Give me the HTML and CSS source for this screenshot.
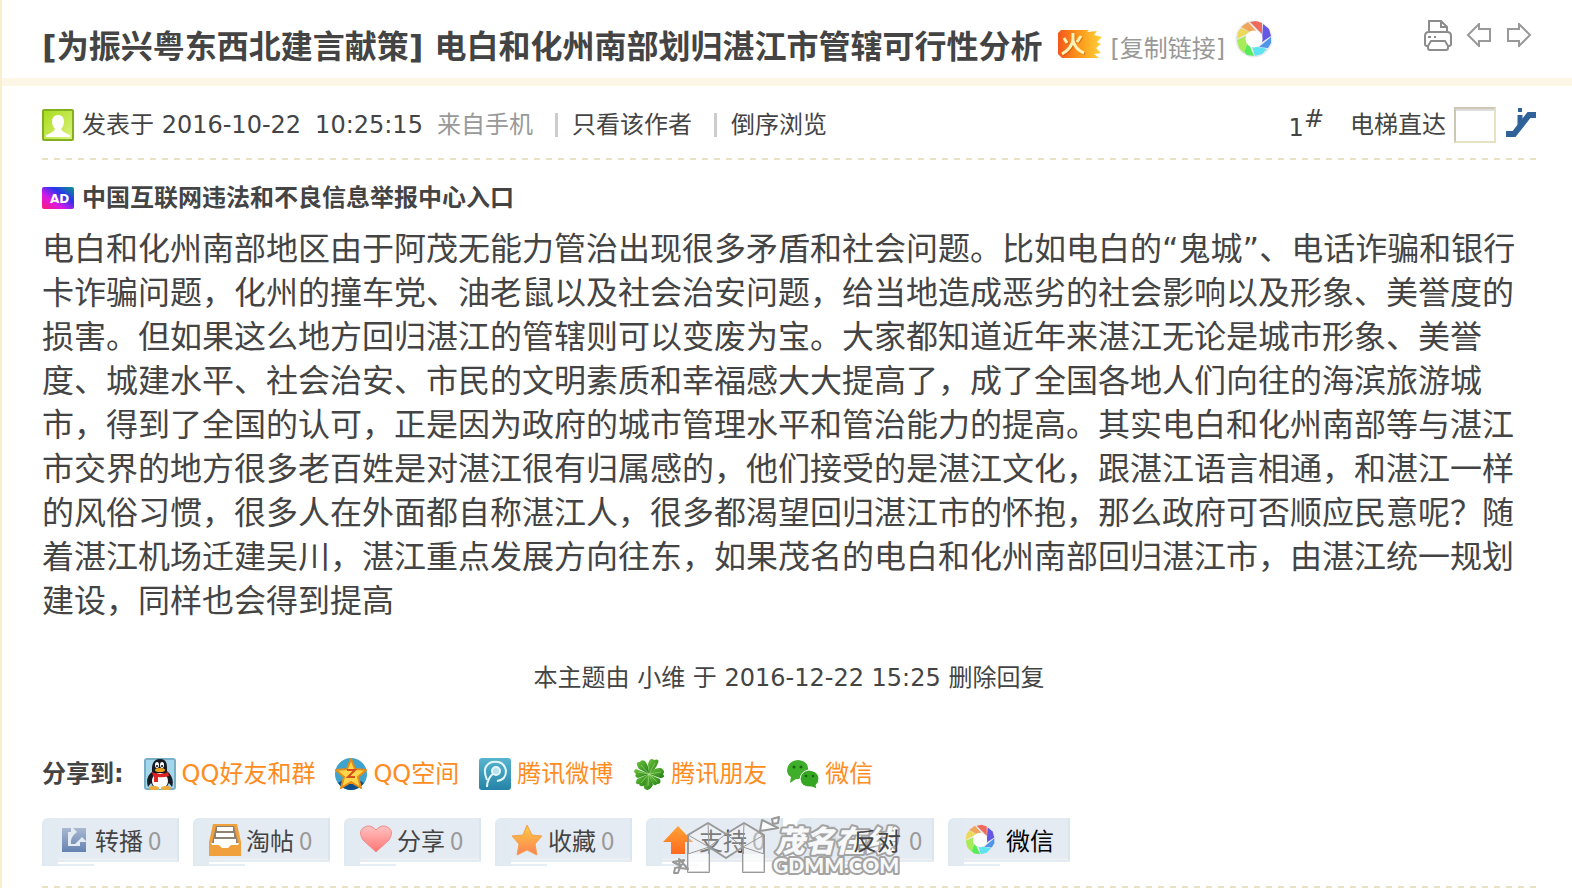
FILE: index.html
```html
<!DOCTYPE html>
<html lang="zh-CN">
<head>
    <meta charset="UTF-8">
    <meta name="viewport" content="width=device-width, initial-scale=1.0">
    <title>电白和化州南部划归湛江市管辖可行性分析</title>
    <link rel="stylesheet" href="styles.css">
</head>
<body>
    <!-- shared shapes -->
    <svg class="sprite" width="0" height="0" aria-hidden="true">
        <symbol id="aperture" viewBox="0 0 38 38">
            <circle cx="19" cy="19" r="18.5" fill="#e9e9ec"/>
            <path d="M15 2 L21 1 L27 3 L27 14 Z" fill="#ee6a5a"/>
            <path d="M28 4 L34 9 L36 16 L27 22 Z" fill="#6557e6"/>
            <path d="M36 17 L36 23 L33 28 L24 27 Z" fill="#4f95ea"/>
            <path d="M32 29 L27 34 L20 36 L17 26 L28 28 Z" fill="#5ee4f0"/>
            <path d="M19 36 L12 35 L9 32 L13 22 Z" fill="#55ec5b"/>
            <path d="M9 33 L4 28 L2 20 L13 15 L13 21 Z" fill="#a6ec58"/>
            <path d="M2 19 L3 12 L6 8 L15 12 Z" fill="#ecd95c"/>
            <path d="M6 7 L13 2 L21 11 L15 12 Z" fill="#efa65a"/>
            <circle cx="19" cy="19" r="8.5" fill="#fff"/>
        </symbol>
        <linearGradient id="fire" x1="0" x2="1"><stop offset="0" stop-color="#f4571c"/><stop offset=".5" stop-color="#fb9a1b"/><stop offset="1" stop-color="#ffd33a"/></linearGradient>
        <linearGradient id="green" x1="0" y1="0" x2="1" y2="1"><stop offset="0" stop-color="#a8dc20"/><stop offset="1" stop-color="#dcf27c"/></linearGradient>
        <linearGradient id="blue" x1="0" y1="0" x2="0" y2="1"><stop offset="0" stop-color="#58b5cf"/><stop offset="1" stop-color="#2583a8"/></linearGradient>
        <linearGradient id="slate" x1="0" y1="0" x2="0" y2="1"><stop offset="0" stop-color="#a9b8d2"/><stop offset="1" stop-color="#6482b0"/></linearGradient>
        <linearGradient id="pink" x1="0" y1="0" x2="0" y2="1"><stop offset="0" stop-color="#ffc3c3"/><stop offset="1" stop-color="#ff7474"/></linearGradient>
        <linearGradient id="gold" x1="0" y1="0" x2="0" y2="1"><stop offset="0" stop-color="#ffcd42"/><stop offset="1" stop-color="#fa8154"/></linearGradient>
        <linearGradient id="orange" x1="0" y1="0" x2="0" y2="1"><stop offset="0" stop-color="#ffa334"/><stop offset="1" stop-color="#ff6a20"/></linearGradient>
        <linearGradient id="leaf" x1="0" y1="0" x2="1" y2="1"><stop offset="0" stop-color="#6fc63d"/><stop offset="1" stop-color="#217d16"/></linearGradient>
    </svg>

    <main class="thread">
        <header class="thread-head">
            <h1>[为振兴粤东西北建言献策] 电白和化州南部划归湛江市管辖可行性分析</h1>
            <svg class="hot" width="44" height="28" viewBox="0 0 44 28" role="img" aria-label="火">
                <path d="M3 0 H31 L29 2 L39 1 L36 5 L44 7 L39 12 L43 14 L38 18 L43 23 L36 24 L41 28 H4 L0 24 V3 Z" fill="url(#fire)"/>
                <path d="M15 3 V10 Q14 18 4 24 M15 11 Q18 20 26 23 M6 8 L9 13 M23 6 L19 12" fill="none" stroke="#a84b12" stroke-width="3" opacity=".4" transform="translate(1 1)"/>
                <path d="M15 3 V10 Q14 18 4 24 M15 11 Q18 20 26 23 M6 8 L9 13 M23 6 L19 12" fill="none" stroke="#fff3b5" stroke-width="3"/>
            </svg>
            <a class="copy-link" href="#">[复制链接]</a>
            <svg class="share-ring" width="38" height="38"><use href="#aperture"/></svg>
            <nav class="tools">
                <a href="#" aria-label="打印">
                    <svg width="28" height="32" viewBox="0 0 28 32" fill="none" stroke="#8c8c8c" stroke-width="2">
                        <path d="M5 12 V2 H17 L23 8 V12 M17 2 V8 H23"/>
                        <path d="M5 27 H3 Q1 27 1 25 V17 Q1 13 5 13 H23 Q27 13 27 17 V25 Q27 27 25 27 H23"/>
                        <path d="M7 22 H21 L24 27 V29 Q24 31 22 31 H6 Q4 31 4 29 V27 Z M4 18 H7 M10 18 H12"/>
                    </svg>
                </a>
                <a href="#" aria-label="上一主题">
                    <svg width="26" height="24" viewBox="0 0 26 24" fill="none" stroke="#999" stroke-width="2"><path d="M2 12 L13 1 V6 H24 V18 H13 V23 Z"/></svg>
                </a>
                <a href="#" aria-label="下一主题">
                    <svg width="26" height="24" viewBox="0 0 26 24" fill="none" stroke="#999" stroke-width="2"><path d="M24 12 L13 1 V6 H2 V18 H13 V23 Z"/></svg>
                </a>
            </nav>
        </header>

        <div class="post">
            <div class="post-meta dashed">
                <svg width="32" height="32" viewBox="0 0 32 32">
                    <rect width="32" height="32" rx="2" fill="#83b022"/>
                    <rect x="2" y="2" width="28" height="28" fill="url(#green)"/>
                    <path d="M16 6 Q22 6 22 13 Q22 17 19 20 Q20 23 28 26 V28 H4 V26 Q12 23 13 20 Q10 17 10 13 Q10 6 16 6" fill="#fff"/>
                </svg>
                <span>发表于 2016-10-22</span>
                <span class="time">10:25:15</span>
                <span class="muted">来自手机</span>
                <a class="filter" href="#">只看该作者</a>
                <a class="filter" href="#">倒序浏览</a>
                <a class="floor" href="#">1<sup>#</sup></a>
                <label for="floorInput">电梯直达</label>
                <input type="text" id="floorInput" name="floor">
                <button type="button" class="lift" aria-label="跳转">
                    <svg width="30" height="30" viewBox="0 0 30 30" fill="none" stroke="#2f6298">
                        <path d="M0 26 H8 L23 7 H30" stroke-width="6"/>
                        <path d="M14 7 V20" stroke-width="5"/>
                        <path d="M14 0 V4" stroke-width="4"/>
                    </svg>
                </button>
            </div>

            <a class="notice" href="#">
                <svg width="32" height="22" viewBox="0 0 32 22">
                    <defs>
                        <linearGradient id="ad" x1="0" y1="1" x2="1" y2="0"><stop offset="0" stop-color="#ff1c70"/><stop offset=".35" stop-color="#d51be8"/><stop offset=".65" stop-color="#2b33ee"/><stop offset="1" stop-color="#069b83"/></linearGradient>
                    </defs>
                    <rect width="32" height="22" rx="2" fill="url(#ad)"/>
                    <text x="8" y="16" class="ad-text">AD</text>
                </svg>
                中国互联网违法和不良信息举报中心入口
            </a>

            <p class="message">电白和化州南部地区由于阿茂无能力管治出现很多矛盾和社会问题。比如电白的“鬼城”、电话诈骗和银行卡诈骗问题，化州的撞车党、油老鼠以及社会治安问题，给当地造成恶劣的社会影响以及形象、美誉度的损害。但如果这么地方回归湛江的管辖则可以变废为宝。大家都知道近年来湛江无论是城市形象、美誉度、城建水平、社会治安、市民的文明素质和幸福感大大提高了，成了全国各地人们向往的海滨旅游城市，得到了全国的认可，正是因为政府的城市管理水平和管治能力的提高。其实电白和化州南部等与湛江市交界的地方很多老百姓是对湛江很有归属感的，他们接受的是湛江文化，跟湛江语言相通，和湛江一样的风俗习惯，很多人在外面都自称湛江人，很多都渴望回归湛江市的怀抱，那么政府可否顺应民意呢？随着湛江机场迁建吴川，湛江重点发展方向往东，如果茂名的电白和化州南部回归湛江市，由湛江统一规划建设，同样也会得到提高</p>

            <p class="mod-log">本主题由 小维 于 2016-12-22 15:25 删除回复</p>

            <div class="share">
                <strong>分享到:</strong>
                <a href="#">
                    <svg width="32" height="32" viewBox="0 0 32 32">
                        <rect width="32" height="32" rx="3" fill="#78afc6"/><rect x="2" y="2" width="28" height="28" fill="#a5d7ec"/>
                        <path d="M4 29 Q1 19 8 14 L8 9 Q9 1 16 1 Q23 1 23 9 V13 Q31 20 28 29 L25 25 L22 30 H10 L7 25 Z" fill="#171a20"/>
                        <ellipse cx="16" cy="23" rx="8" ry="8" fill="#fff"/>
                        <ellipse cx="13" cy="7" rx="2" ry="3" fill="#fff"/><ellipse cx="18" cy="7" rx="2" ry="3" fill="#fff"/>
                        <circle cx="13" cy="8" r="1"/><circle cx="18" cy="8" r="1"/>
                        <ellipse cx="16" cy="12" rx="5" ry="2" fill="#f5a51d"/>
                        <path d="M8 14 Q16 18 24 14 L25 18 Q18 20 14 19 V24 H10 V18 Q8 17 8 14" fill="#dd2323"/>
                        <ellipse cx="10" cy="30" rx="5" ry="2" fill="#edac39"/><ellipse cx="22" cy="30" rx="5" ry="2" fill="#edac39"/>
                    </svg>
                    QQ好友和群
                </a>
                <a href="#">
                    <svg width="32" height="32" viewBox="0 0 32 32">
                        <circle cx="16" cy="16" r="16" fill="#3fa3cc"/><path d="M3 25 Q16 16 29 25 Q24 32 16 32 Q8 32 3 25" fill="#104f8c"/>
                        <path d="M16 1 L20 11 L31 12 L23 19 L26 30 L16 24 L6 30 L9 19 L1 12 L12 11 Z" fill="#ffd74b" stroke="#e78c16" stroke-width="2" stroke-linejoin="round"/>
                        <path d="M12 12 H20 L13 19 H20" fill="none" stroke="#d6501c" stroke-width="2"/>
                    </svg>
                    QQ空间
                </a>
                <a href="#">
                    <svg width="32" height="32" viewBox="0 0 32 32">
                        <rect width="32" height="32" rx="3" fill="url(#blue)"/>
                        <g fill="none" stroke="#e6f7fc" stroke-width="2"><path d="M8 22 Q2 8 13 4 Q25 2 27 13 Q27 22 18 23 M8 29 Q8 20 16 14"/><circle cx="17" cy="13" r="4" fill="#b8e2ee"/></g>
                    </svg>
                    腾讯微博
                </a>
                <a href="#">
                    <svg width="32" height="32" viewBox="0 0 32 32">
                        <g fill="url(#leaf)">
                            <path d="M16 16 L6 11 Q1 3 7 4 Q8 1 12 3 Q16 8 16 16"/><path d="M16 16 L15 6 Q17 -1 21 2 Q27 0 25 5 Q23 11 16 16"/>
                            <path d="M16 16 Q21 9 28 10 Q33 13 30 16 Q33 20 27 20 Z"/><path d="M16 16 L27 21 Q29 26 24 26 Q22 29 19 25 Z"/>
                            <path d="M16 16 L20 27 Q16 34 12 31 Q9 29 13 23 Z"/><path d="M16 16 L12 27 Q7 30 6 26 Q1 27 4 21 Z"/>
                            <path d="M16 16 L5 20 Q1 19 3 16 Q-1 13 3 11 Z"/>
                        </g>
                        <path d="M8 7 L16 16 L22 5 M28 14 L16 16 L24 24 M5 14 L16 16 L8 25 M16 16 L15 28" fill="none" stroke="#c0e896" opacity=".5"/>
                    </svg>
                    腾讯朋友
                </a>
                <a href="#">
                    <svg width="32" height="32" viewBox="0 0 32 32">
                        <path d="M11 2 Q22 3 21 13 Q20 22 9 21 L3 25 L4 19 Q0 17 0 12 Q1 3 11 2" fill="#3fae2b"/>
                        <path d="M22 12 Q31 13 32 20 Q32 25 29 27 L30 31 L25 29 Q14 30 13 21 Q14 13 22 12" fill="#34a622" stroke="#fff"/>
                        <g fill="#17640d"><circle cx="7" cy="9" r="1.5"/><circle cx="14" cy="9" r="1.5"/><circle cx="19" cy="18" r="1.3"/><circle cx="26" cy="18" r="1.3"/></g>
                    </svg>
                    微信
                </a>
            </div>

            <div class="actions">
                <button type="button">
                    <svg width="32" height="32" viewBox="0 0 32 32"><path d="M4 4 H13 V8 H10 V22 H22 V18 H28 V28 H4 Z M15 4 H28 V17 L24 13 L17 20 L13 20 Q12 13 19 8 Z" fill="url(#slate)"/></svg>
                    <span>转播</span><span class="count">0</span>
                </button>
                <button type="button">
                    <svg width="32" height="32" viewBox="0 0 32 32">
                        <path d="M4 0 H28 L32 18 V32 H0 V18 Z" fill="#f0a03c"/>
                        <path d="M7 2 H25 L29 19 H3 Z" fill="#8f8171"/>
                        <path d="M8 3 H24 V7 H8 Z M7 9 H25 V13 H7 Z M5 15 H27 V19 H5 Z" fill="#fff"/>
                        <path d="M2 19 H30 L29 21 H22 L19 24 H13 L10 21 H3 Z" fill="#fff"/>
                    </svg>
                    <span>淘帖</span><span class="count">0</span>
                </button>
                <button type="button">
                    <svg width="32" height="32" viewBox="0 0 32 32"><path d="M16 28 L3 16 Q-2 8 3 4 Q10 -1 16 6 Q22 -1 29 4 Q34 8 29 16 Z" fill="url(#pink)" stroke="#ef8c8c"/></svg>
                    <span>分享</span><span class="count">0</span>
                </button>
                <button type="button">
                    <svg width="32" height="32" viewBox="0 0 32 32"><path d="M16 1 L21 11 L31 12 L24 20 L26 31 L16 26 L6 31 L8 20 L1 12 L12 11 Z" fill="url(#gold)" stroke="#f3a04d" stroke-linejoin="round"/></svg>
                    <span>收藏</span><span class="count">0</span>
                </button>
                <button type="button">
                    <svg width="32" height="32" viewBox="0 0 32 32"><path d="M16 2 L31 18 H23 V30 H9 V18 H1 Z" fill="url(#orange)"/></svg>
                    <span>支持</span><span class="count">0</span>
                </button>
                <button type="button" class="against">
                    <svg width="32" height="32" viewBox="0 0 32 32"><path d="M16 30 L30 14 H23 V2 H9 V14 H2 Z" fill="#d8dce1"/></svg>
                    <span>反对</span><span class="count">0</span>
                </button>
                <button type="button" class="wechat">
                    <svg width="32" height="32"><use href="#aperture"/></svg>
                    <span>微信</span>
                </button>

                <svg class="watermark" width="228" height="62" viewBox="0 0 228 62">
                    <g fill="#fff" fill-opacity=".3" stroke="#999" stroke-width="2" stroke-linejoin="round">
                        <path d="M16 19 L36 7 L54 18 L72 7 L92 19 V56 H71 V31 L54 42 L37 31 V56 H16 Z"/>
                        <path d="M16 19 L37 31 L36 7 M37 31 L54 18 L71 31 L72 7 M71 31 L92 19 M16 56 V38 L37 31 M92 38 L71 31" fill="none" stroke-width="1"/>
                        <path d="M16 38 H37 V56 H16 Z M71 38 H92 V56 H71 Z" fill-opacity=".6" stroke="none"/>
                        <path d="M90 4 L106 12 L88 15 Z M100 3 L107 1 L106 7 L101 8 Z M1 46 L12 44 L9 50 Z M3 52 L8 51 L6 57 L2 57 Z M7 43 L16 53 L8 52 Z" fill-opacity=".8"/>
                    </g>
                    <text x="103" y="36" class="mark-cn">茂名在线</text>
                    <text x="101" y="57" class="mark-en">GDMM.COM</text>
                </svg>
            </div>
            <div class="dashed"></div>
        </div>
    </main>
</body>
</html>
```
FILE: styles.css
```css
:root {
    --text: #444;
    --muted: #999;
    --orange: #ff8c1e;
    --cream: #fcf7e4;
    --cream-dark: #e8e2c4;
    --button: #e5ebf2;
}

* {
    box-sizing: border-box;
}

body {
    margin: 0;
    background: #fff;
    color: var(--text);
    font-family: "DejaVu Sans", "Noto Sans CJK SC", sans-serif;
    font-size: 24px;
    line-height: 32px;
    overflow-x: hidden;
}

a {
    color: inherit;
    text-decoration: none;
}

svg {
    display: block;
    flex: none;
}

.sprite {
    position: absolute;
}

.thread {
    border-left: 2px solid #f8efcf;
}

/* title bar */
.thread-head {
    display: flex;
    align-items: center;
    height: 86px;
    padding: 0 40px;
    border-bottom: 8px solid var(--cream);
}

.thread-head h1 {
    margin: 16px 16px 0 0;
    font-size: 32px;
    line-height: 44px;
    font-weight: bold;
    white-space: nowrap;
}

.hot {
    margin-top: 10px;
}

.copy-link {
    margin: 20px 10px 0 8px;
    color: var(--muted);
    white-space: nowrap;
}

.tools {
    display: flex;
    align-items: center;
    gap: 14px;
    margin-left: auto;
    margin-bottom: 8px;
}

/* post */
.post {
    padding: 0 36px 0 40px;
}

.dashed {
    background: repeating-linear-gradient(to right, var(--cream-dark) 0 6px, transparent 6px 12px) left bottom / 100% 2px no-repeat;
    min-height: 2px;
}

.post-meta {
    display: flex;
    align-items: center;
    gap: 8px;
    height: 74px;
    padding-top: 4px;
    white-space: nowrap;
}

.time {
    margin: 0 6px;
}

.muted {
    color: var(--muted);
}

.filter {
    display: flex;
    align-items: center;
    margin-left: 14px;
}

.filter::before {
    content: "";
    width: 3px;
    height: 24px;
    margin-right: 14px;
    background: #ccc;
}

.floor {
    margin-left: auto;
    margin-right: 18px;
}

.floor sup {
    font-size: 24px;
    line-height: 1;
}

.post-meta input {
    width: 42px;
    height: 36px;
    padding: 4px;
    border: 2px solid;
    border-color: #cdc8b4 #e8e2c4 #e8e2c4 #cdc8b4;
    background: #fff;
    box-shadow: inset 0 2px 0 #ddd;
    font: inherit;
}

.lift {
    padding: 0 0 4px 2px;
    border: none;
    background: none;
    cursor: pointer;
}

.notice {
    display: flex;
    align-items: center;
    gap: 8px;
    margin-top: 22px;
    font-weight: bold;
}

.ad-text {
    fill: #fff;
    font: bold 12px "DejaVu Sans", sans-serif;
}

.message {
    margin: 13px 0 0;
    font-size: 32px;
    line-height: 44px;
}

.mod-log {
    margin: 39px 0 0;
    text-align: center;
}

/* share links */
.share {
    display: flex;
    align-items: center;
    gap: 20px;
    margin-top: 64px;
    white-space: nowrap;
}

.share a {
    display: flex;
    align-items: center;
    gap: 6px;
    color: var(--orange);
}

/* action buttons */
.actions {
    position: relative;
    display: flex;
    gap: 14px;
    margin: 28px 0 20px;
}

.actions button {
    display: flex;
    align-items: center;
    gap: 5px;
    min-width: 137px;
    height: 48px;
    padding: 0 16px 4px;
    border: none;
    border-radius: 6px 0 0 0;
    background:
        linear-gradient(#e6eef5, #e6eef5) 16px 46px / 36px 2px no-repeat,
        linear-gradient(#dfe9f1, #dfe9f1) left top / 2px 48px no-repeat,
        linear-gradient(#e2eaf2, #e2eaf2) left top / 16px 48px no-repeat,
        linear-gradient(#d9e6ee, #d9e6ee) right top / 2px 42px no-repeat,
        linear-gradient(#edf0f3, #edf0f3) 16px 40px / 100% 2px no-repeat,
        linear-gradient(var(--button), var(--button)) left top / 100% 44px no-repeat;
    color: var(--text);
    font: 24px/32px "Noto Sans CJK SC", sans-serif;
    white-space: nowrap;
    cursor: pointer;
}

.actions .count {
    color: var(--muted);
}

.actions .against {
    gap: 8px;
    padding-right: 8px;
}

/* keep this label readable above the watermark */
.against span {
    position: relative;
    z-index: 2;
}

.actions .wechat {
    gap: 10px;
    min-width: 122px;
    color: #000;
}

.watermark {
    position: absolute;
    z-index: 1;
    left: 630px;
    top: -2px;
    pointer-events: none;
}

.watermark text {
    fill: #f7f8f9;
    stroke: #a3a3a3;
    stroke-width: 4px;
    stroke-linejoin: round;
    paint-order: stroke;
}

.mark-cn {
    font: italic 900 30px "Noto Sans CJK SC", sans-serif;
}

.mark-en {
    font: 900 21px Lato, sans-serif;
}
```
